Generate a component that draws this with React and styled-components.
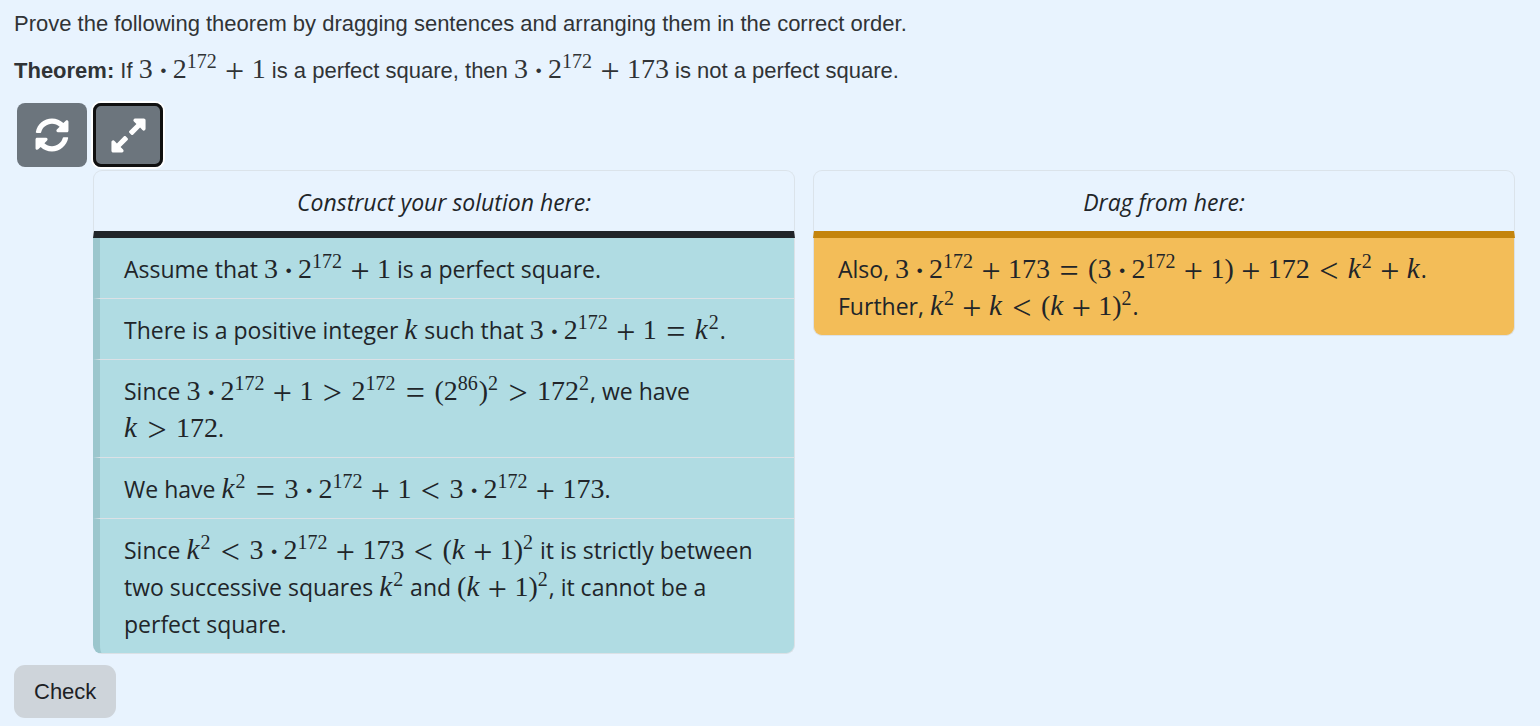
import React from "react";
import styled, { createGlobalStyle } from "styled-components";
import { FaSyncAlt, FaExpandAlt } from "react-icons/fa";

const GlobalStyle = createGlobalStyle`
  * { box-sizing: border-box; }
  body {
    margin: 0;
    background: #e8f3fe;
    color: #212529;
    font-family: "Liberation Sans", Arial, sans-serif;
    font-size: 22px;
  }
`;

const Page = styled.main`
  padding: 6px 25px 8px 14px;
`;

const Statement = styled.p`
  margin: 0 0 11px;
  line-height: 36px;
  color: #303336;
`;

const Toolbar = styled.div`
  display: flex;
  gap: 6px;
  padding-left: 3px;
  margin-top: 14px;
`;

const IconButton = styled.button`
  display: flex;
  align-items: center;
  justify-content: center;
  width: 70px;
  height: 64px;
  padding: 0;
  border: 0;
  border-radius: 8px;
  background: #6c757d;
  color: #fff;
  outline: ${(p) => (p.$active ? "3px solid #101010" : "none")};
  outline-offset: -3px;
  box-shadow: ${(p) => (p.$active ? "0 0 0 2px #fff" : "none")};
`;

const Columns = styled.div`
  display: flex;
  align-items: flex-start;
  gap: 18px;
  margin: 3px 0 11px;
  padding-left: 79px;
`;

const Panel = styled.section`
  flex: 1 1 0;
  min-width: 0;
  font-family: "Open Sans", "Segoe UI", sans-serif;
  font-size: 23px;
`;

const PanelTitle = styled.h2`
  margin: 0;
  padding: 13px 24px 11px;
  border: 1px solid #dbe3ea;
  border-bottom: 7px solid ${(p) => (p.$used ? "#212529" : "#c4840c")};
  border-radius: 9px 9px 0 0;
  font-size: 23px;
  font-style: italic;
  font-weight: 400;
  line-height: 36px;
  text-align: center;
`;

const List = styled.ul`
  margin: 0;
  padding: 0;
  list-style: none;
`;

const Item = styled.li`
  padding: 13px 24px 10px;
  border: 0 solid #dbe1e6;
  border-width: 0 1px 1px ${(p) => (p.$used ? "7px" : "1px")};
  border-left-color: ${(p) => (p.$used ? "#9bc6cd" : "#dbe1e6")};
  background: ${(p) => (p.$used ? "#b0dce3" : "#f3bd58")};
  line-height: 37px;
  cursor: grab;

  &:last-child { border-radius: 0 0 9px 9px; }
`;

const Formula = styled.span`
  font-family: "Liberation Serif", "Times New Roman", serif;
  font-size: 28px;
  line-height: 28px;
  white-space: nowrap;
`;

const Sup = styled.sup`
  margin-right: 1px;
  font-size: 20px;
  line-height: 0;
  vertical-align: 10px;
`;

const Variable = styled.i`
  display: inline-block;
  width: 14px;
  font-size: 29px;
`;

const Operator = styled.span`
  display: inline-block;
  width: 22px;
  margin: 0 ${(p) => (p.$relation ? "8px" : "6px")};
  font-size: 34px;
  text-align: center;
  vertical-align: -4px;
`;

const Dot = styled.span`
  display: inline-block;
  width: 8px;
  margin: 0 6px;
  font-weight: 700;
  text-align: center;
  vertical-align: -2px;
`;

const CheckButton = styled.button`
  height: 53px;
  padding: 0 20px;
  border: 0;
  border-radius: 11px;
  background: #ced4da;
  color: #1d2125;
  font-family: inherit;
  font-size: 22px;
`;

// Typesets a short formula: "^172" is an exponent, "*" a centred dot.
function M({ children }) {
  const tokens = children.match(/\^\d+|[a-z]|\d+|[+=<>*()]/g);
  return (
    <Formula>
      {tokens.map((t, i) => {
        if (t[0] === "^") return <Sup key={i}>{t.slice(1)}</Sup>;
        if (t === "*") return <Dot key={i}>·</Dot>;
        if (t === "+") return <Operator key={i}>+</Operator>;
        if ("=<>".includes(t)) return <Operator key={i} $relation>{t}</Operator>;
        if (/[a-z]/.test(t)) return <Variable key={i}>{t}</Variable>;
        return t;
      })}
    </Formula>
  );
}

const solution = [
  <>Assume that <M>3*2^172+1</M> is a perfect square.</>,
  <>There is a positive integer <M>k</M> such that <M>3*2^172+1=k^2</M>.</>,
  <>Since <M>{"3*2^172+1>2^172=(2^86)^2>172^2"}</M>, we have <M>{"k>172"}</M>.</>,
  <>We have <M>{"k^2=3*2^172+1<3*2^172+173"}</M>.</>,
  <>
    Since <M>{"k^2<3*2^172+173<(k+1)^2"}</M> it is strictly between two
    successive squares <M>k^2</M> and <M>(k+1)^2</M>, it cannot be a perfect
    square.
  </>,
];

const available = [
  <>
    Also, <M>{"3*2^172+173=(3*2^172+1)+172<k^2+k"}</M>. Further,{" "}
    <M>{"k^2+k<(k+1)^2"}</M>.
  </>,
];

function SentencePanel({ title, items, used }) {
  return (
    <Panel>
      <PanelTitle $used={used}>{title}</PanelTitle>
      <List>
        {items.map((item, i) => (
          <Item key={i} $used={used} draggable>{item}</Item>
        ))}
      </List>
    </Panel>
  );
}

export default function App() {
  return (
    <Page>
      <GlobalStyle />
      <Statement>
        Prove the following theorem by dragging sentences and arranging them in
        the correct order.
      </Statement>
      <Statement>
        <strong>Theorem:</strong> If <M>3*2^172+1</M> is a perfect square,
        then <M>3*2^172+173</M> is not a perfect square.
      </Statement>
      <Toolbar>
        <IconButton type="button" aria-label="Reset"><FaSyncAlt size={34} /></IconButton>
        <IconButton type="button" aria-label="Expand" $active><FaExpandAlt size={39} /></IconButton>
      </Toolbar>
      <Columns>
        <SentencePanel title="Construct your solution here:" items={solution} used />
        <SentencePanel title="Drag from here:" items={available} />
      </Columns>
      <CheckButton type="button">Check</CheckButton>
    </Page>
  );
}
